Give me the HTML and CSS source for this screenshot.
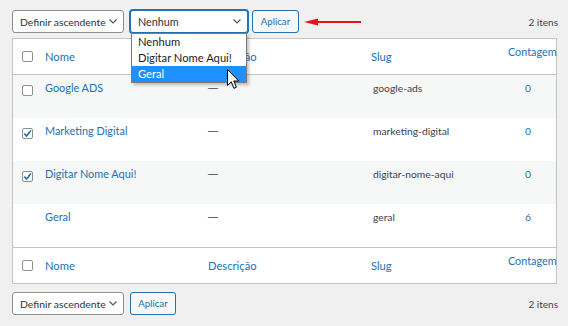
FILE: index.html
```html
<!DOCTYPE html>
<html lang="pt-BR">
<head>
    <meta charset="UTF-8">
    <title>Categorias</title>
    <link rel="stylesheet" href="styles.css">
</head>
<body>
    <div class="wrap">
        <div class="tablenav top">
            <div class="select wide">
                <span>Definir ascendente</span>
                <svg class="chevron" width="8" height="5" viewBox="0 0 8 5"><path d="M0.5 0.5 L4 4 L7.5 0.5" fill="none" stroke="#50575e" stroke-width="1.2"/></svg>
            </div>
            <div class="dropdown">
                <div class="select parent focused">
                    <span>Nenhum</span>
                    <svg class="chevron" width="8" height="5" viewBox="0 0 8 5"><path d="M0.5 0.5 L4 4 L7.5 0.5" fill="none" stroke="#50575e" stroke-width="1.2"/></svg>
                </div>
                <ul class="options">
                    <li>Nenhum</li>
                    <li>Digitar Nome Aqui!</li>
                    <li class="active">Geral</li>
                </ul>
                <svg class="cursor" width="13" height="21" viewBox="0 0 13 21">
                    <path d="M0.5 0.5 L0.5 16.5 L4.3 12.8 L6.9 19.3 L9.4 18.3 L6.8 12 L11.8 12 Z" fill="#fff" stroke="#000" stroke-width="1" stroke-linejoin="round"/>
                </svg>
            </div>
            <button class="apply">Aplicar</button>
            <svg class="red-arrow" width="58" height="10" viewBox="0 0 58 10">
                <path d="M12 5 L57 5" stroke="#e8141c" stroke-width="2"/>
                <path d="M0 5 L14 1.5 L14 8.5 Z" fill="#e8141c"/>
            </svg>
            <span class="items">2 itens</span>
        </div>

        <table class="terms">
            <colgroup>
                <col class="c-cb">
                <col class="c-name">
                <col class="c-desc">
                <col class="c-slug">
                <col class="c-count">
            </colgroup>
            <thead>
                <tr>
                    <th class="cb"><span class="check"></span></th>
                    <th><a href="#">Nome</a></th>
                    <th><a href="#">Descrição</a></th>
                    <th><a href="#">Slug</a></th>
                    <th class="count-head"><a href="#">Contagem</a></th>
                </tr>
            </thead>
            <tbody>
                <tr class="alt">
                    <td class="cb"><span class="check"></span></td>
                    <td><a class="row-title" href="#">Google ADS</a></td>
                    <td class="dash">—</td>
                    <td class="slug">google-ads</td>
                    <td class="num"><a href="#">0</a></td>
                </tr>
                <tr>
                    <td class="cb"><span class="check checked"><svg width="9" height="9" viewBox="0 0 9 9"><path d="M1.2 4.6 L3.6 7 L7.9 1.6" fill="none" stroke="#2271b1" stroke-width="1.6"/></svg></span></td>
                    <td><a class="row-title" href="#">Marketing Digital</a></td>
                    <td class="dash">—</td>
                    <td class="slug">marketing-digital</td>
                    <td class="num"><a href="#">0</a></td>
                </tr>
                <tr class="alt">
                    <td class="cb"><span class="check checked"><svg width="9" height="9" viewBox="0 0 9 9"><path d="M1.2 4.6 L3.6 7 L7.9 1.6" fill="none" stroke="#2271b1" stroke-width="1.6"/></svg></span></td>
                    <td><a class="row-title" href="#">Digitar Nome Aqui!</a></td>
                    <td class="dash">—</td>
                    <td class="slug">digitar-nome-aqui</td>
                    <td class="num"><a href="#">0</a></td>
                </tr>
                <tr>
                    <td class="cb"></td>
                    <td><a class="row-title" href="#">Geral</a></td>
                    <td class="dash">—</td>
                    <td class="slug">geral</td>
                    <td class="num"><a href="#">6</a></td>
                </tr>
            </tbody>
            <tfoot>
                <tr>
                    <th class="cb"><span class="check"></span></th>
                    <th><a href="#">Nome</a></th>
                    <th><a href="#">Descrição</a></th>
                    <th><a href="#">Slug</a></th>
                    <th class="count-head"><a href="#">Contagem</a></th>
                </tr>
            </tfoot>
        </table>

        <div class="tablenav bottom">
            <div class="select wide">
                <span>Definir ascendente</span>
                <svg class="chevron" width="8" height="5" viewBox="0 0 8 5"><path d="M0.5 0.5 L4 4 L7.5 0.5" fill="none" stroke="#50575e" stroke-width="1.2"/></svg>
            </div>
            <button class="apply small">Aplicar</button>
            <span class="items">2 itens</span>
        </div>
    </div>
</body>
</html>
```

FILE: styles.css
```css
body {
    margin: 0;
    background: #f0f0f1;
    font-family: Lato, "Noto Sans", sans-serif;
    font-size: 10.3px;
    color: #3c434a;
}

a {
    color: #2271b1;
    text-decoration: none;
}

.wrap {
    padding: 10px 10px 0 12px;
}

.tablenav {
    display: flex;
    align-items: center;
    height: 23px;
    white-space: nowrap;
}

.tablenav.top {
    margin-bottom: 5px;
}

.tablenav.bottom {
    margin-top: 8px;
}

.select {
    box-sizing: border-box;
    height: 23px;
    border: 1px solid #8c8f94;
    border-radius: 3px;
    background: #fff;
    display: flex;
    align-items: center;
    justify-content: space-between;
    padding: 0 6px 0 7px;
    color: #2c3338;
    font-size: 10.4px;
}

.select.wide {
    width: 112px;
}

.select.parent {
    width: 118px;
    font-size: 10.8px;
}

.select.focused {
    border-color: #2271b1;
    box-shadow: 0 0 0 1px #2271b1;
}

.dropdown {
    position: relative;
    margin-left: 6px;
}

.options {
    position: absolute;
    top: 23px;
    left: 1px;
    width: 116px;
    box-sizing: border-box;
    margin: 0;
    padding: 0;
    list-style: none;
    background: #fff;
    border: 1px solid #7a7a7a;
    box-shadow: 2px 2px 3px rgba(0,0,0,0.25);
    z-index: 2;
}

.options li {
    height: 16px;
    line-height: 16px;
    padding-left: 6px;
    color: #1d2327;
    font-size: 11.2px;
}

.options li.active {
    background: #1e90ff;
    color: #fff;
}

.cursor {
    position: absolute;
    left: 97px;
    top: 59px;
    z-index: 3;
}

.apply {
    box-sizing: border-box;
    height: 23px;
    width: 47px;
    margin-left: 4px;
    padding: 0;
    border: 1px solid #2271b1;
    border-radius: 3px;
    background: #f6f7f7;
    color: #2271b1;
    font-family: inherit;
    font-size: 9.6px;
}

.apply.small {
    width: 46px;
    margin-left: 6px;
}

.red-arrow {
    margin-left: 5px;
}

.items {
    margin-left: auto;
    color: #3c434a;
    font-size: 10px;
}

.terms {
    width: 545px;
    table-layout: fixed;
    border-collapse: separate;
    border-spacing: 0;
    border: 1px solid #c3c4c7;
    background: #fff;
}

.c-cb { width: 24px; }
.c-name { width: 163px; }
.c-desc { width: 163px; }
.c-slug { width: 137px; }
.c-count { width: 56px; }

.terms th {
    height: 36px;
    box-sizing: border-box;
    padding: 0 0 0 8px;
    text-align: left;
    font-weight: normal;
    vertical-align: middle;
    font-size: 11.2px;
}

.terms thead th {
    border-bottom: 1px solid #c3c4c7;
}

.terms tfoot th {
    border-top: 1px solid #c3c4c7;
}

.terms th.count-head {
    padding-bottom: 10px;
    white-space: nowrap;
    font-size: 10.8px;
}

.terms td {
    height: 43px;
    box-sizing: border-box;
    padding: 5px 0 0 8px;
    vertical-align: top;
    line-height: 16px;
}

.terms tbody tr.alt td {
    background: #f6f7f7;
}

.terms .cb {
    padding: 0 0 0 9px;
}

.terms td.cb {
    padding-top: 10px;
}

.terms td.dash {
    font-family: "Liberation Sans", sans-serif;
    font-size: 10px;
}

.terms td.slug {
    padding-left: 10px;
}

.check {
    box-sizing: border-box;
    display: block;
    width: 11px;
    height: 11px;
    border: 1px solid #8c8f94;
    border-radius: 2px;
    background: #fff;
}

.check svg {
    display: block;
}

.row-title {
    font-size: 10.9px;
}

.terms td.num {
    padding-left: 0;
    text-align: center;
}
```
